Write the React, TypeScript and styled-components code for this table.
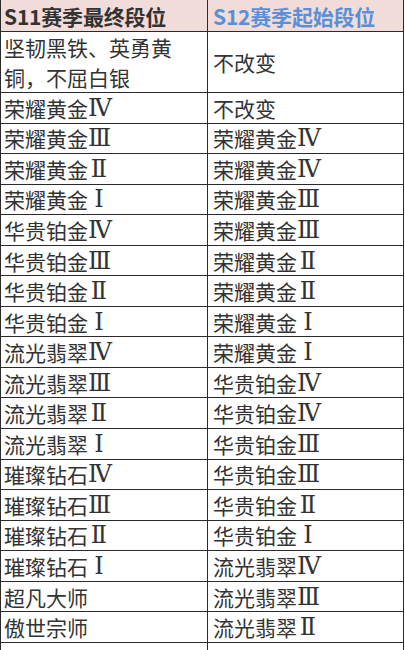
import React from "react";
import styled, { createGlobalStyle } from "styled-components";

const Global = createGlobalStyle`
  html, body { margin: 0; padding: 0; background: #ffffff; }
  body { font-family: "Noto Sans CJK SC", "Noto Sans", sans-serif; }
`;

const Table = styled.div`
  display: grid;
  grid-template-columns: 207px 196px;
  grid-template-rows: 32px 61px;
  grid-auto-rows: 30.56px;
  width: 403px;
  border-left: 1px solid #2a2a2a;
  box-sizing: border-box;
`;

const Cell = styled.div<{ $head?: boolean; $blue?: boolean; $right?: boolean }>`
  box-sizing: border-box;
  display: flex;
  align-items: center;
  padding-left: ${(p) => (p.$right ? "5px" : "3px")};
  border-right: 1px solid #2a2a2a;
  border-bottom: 1px solid #2a2a2a;
  background: ${(p) => (p.$head ? "#f1dcda" : "#ffffff")};
  color: ${(p) => (p.$blue ? "#5a90d8" : "#333333")};
  font-family: "Noto Sans CJK SC", "Noto Sans", sans-serif;
  font-size: 21px;
  font-weight: ${(p) => (p.$head ? 700 : 400)};
  line-height: 30px;
  white-space: nowrap;
  overflow: hidden;
  letter-spacing: ${(p) => (p.$head ? "-0.2px" : "0")};
`;

const Numeral = styled.span<{ $narrow?: boolean }>`
  font-family: "DejaVu Serif", "Liberation Serif", serif;
  font-size: 24px;
  line-height: 30px;
  display: inline-block;
  min-width: 22px;
  text-align: ${(p) => (p.$narrow ? "center" : "left")};
`;

const Rank = ({ text }: { text: string }) => {
  const m = text.match(/^(.*?)([ⅠⅡⅢⅣ])$/);
  if (!m) return <>{text}</>;
  return (
    <>
      {m[1]}
      <Numeral $narrow={m[2] === "Ⅰ" || m[2] === "Ⅱ"}>{m[2]}</Numeral>
    </>
  );
};

const rows: [string, string][] = [
  ["荣耀黄金Ⅳ", "不改变"],
  ["荣耀黄金Ⅲ", "荣耀黄金Ⅳ"],
  ["荣耀黄金Ⅱ", "荣耀黄金Ⅳ"],
  ["荣耀黄金Ⅰ", "荣耀黄金Ⅲ"],
  ["华贵铂金Ⅳ", "荣耀黄金Ⅲ"],
  ["华贵铂金Ⅲ", "荣耀黄金Ⅱ"],
  ["华贵铂金Ⅱ", "荣耀黄金Ⅱ"],
  ["华贵铂金Ⅰ", "荣耀黄金Ⅰ"],
  ["流光翡翠Ⅳ", "荣耀黄金Ⅰ"],
  ["流光翡翠Ⅲ", "华贵铂金Ⅳ"],
  ["流光翡翠Ⅱ", "华贵铂金Ⅳ"],
  ["流光翡翠Ⅰ", "华贵铂金Ⅲ"],
  ["璀璨钻石Ⅳ", "华贵铂金Ⅲ"],
  ["璀璨钻石Ⅲ", "华贵铂金Ⅱ"],
  ["璀璨钻石Ⅱ", "华贵铂金Ⅰ"],
  ["璀璨钻石Ⅰ", "流光翡翠Ⅳ"],
  ["超凡大师", "流光翡翠Ⅲ"],
  ["傲世宗师", "流光翡翠Ⅱ"],
  ["", ""],
];

export default function App() {
  return (
    <>
      <Global />
      <Table>
        <Cell $head>S11赛季最终段位</Cell>
        <Cell $head $blue $right>S12赛季起始段位</Cell>
        <Cell>
          <span>
            坚韧黑铁、英勇黄
            <br />
            铜，不屈白银
          </span>
        </Cell>
        <Cell $right>不改变</Cell>
        {rows.map(([a, b], i) => (
          <React.Fragment key={i}>
            <Cell>
              <Rank text={a} />
            </Cell>
            <Cell $right>
              <Rank text={b} />
            </Cell>
          </React.Fragment>
        ))}
      </Table>
    </>
  );
}
